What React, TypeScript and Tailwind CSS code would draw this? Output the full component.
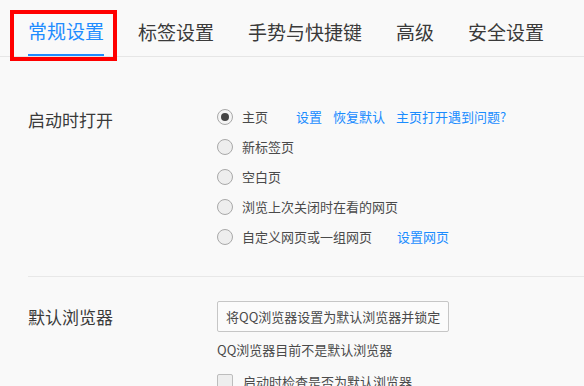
import React from "react";

const tabs = ["常规设置", "标签设置", "手势与快捷键", "高级", "安全设置"];

const startOptions = [
  { label: "主页", checked: true },
  { label: "新标签页" },
  { label: "空白页" },
  { label: "浏览上次关闭时在看的网页" },
  { label: "自定义网页或一组网页" },
];

const Radio: React.FC<{ checked?: boolean }> = ({ checked }) => (
  <span
    className={`w-[16px] h-[16px] rounded-full border border-[#a9a9a9] flex items-center justify-center shrink-0 ${
      checked ? "bg-[#f4f4f4]" : "bg-[#eeeeee]"
    }`}
  >
    {checked && <span className="w-[8px] h-[8px] rounded-full bg-[#444]" />}
  </span>
);

export default function App() {
  return (
    <div
      className="relative w-[584px] h-[386px] overflow-hidden bg-[#f9f9f9] text-[#3a3a3a]"
      style={{ fontFamily: '"Noto Sans CJK SC", "Noto Sans", sans-serif' }}
    >
      {/* Tabs */}
      <div className="flex h-[57px] pl-[28px] gap-[34px] border-b border-[#e6e6e6]">
        {tabs.map((t, i) => (
          <div
            key={t}
            className={`h-[56px] flex items-center pt-[8px] text-[19px] leading-[24px] ${
              i === 0 ? "text-[#1e8cff] border-b-2 border-[#1e8cff]" : "text-[#3a3a3a]"
            }`}
          >
            {t}
          </div>
        ))}
      </div>

      {/* red highlight round the active tab */}
      <div className="absolute left-[10px] top-[10px] w-[107px] h-[51px] border-4 border-[#ff0000]" />

      {/* Startup */}
      <div className="flex pl-[28px] pt-[45px]">
        <div className="w-[189px] pt-[6px] text-[17px] leading-[24px]">启动时打开</div>
        <div className="flex flex-col text-[13px] text-[#4a4a4a]">
          {startOptions.map((o, i) => (
            <div key={o.label} className="h-[30px] flex items-center">
              <Radio checked={o.checked} />
              <span className="ml-[9px]">{o.label}</span>
              {i === 0 && (
                <div className="flex gap-[11px] ml-[28px] text-[#1a8cff]">
                  <span>设置</span>
                  <span>恢复默认</span>
                  <span>主页打开遇到问题?</span>
                </div>
              )}
              {i === 4 && <span className="ml-[25px] text-[#1a8cff]">设置网页</span>}
            </div>
          ))}
        </div>
      </div>

      <div className="ml-[28px] mt-[24px] h-px bg-[#e8e8e8]" />

      {/* Default browser */}
      <div className="flex pl-[28px] pt-[24px]">
        <div className="w-[189px] mt-[4px] text-[17px] leading-[24px]">默认浏览器</div>
        <div className="flex flex-col items-start text-[13px] text-[#4a4a4a]">
          <button className="h-[31px] px-[8px] border border-[#c6c6c6] rounded-[2px] bg-[#fbfbfb] text-[13px] text-[#4a4a4a] leading-[20px]">
            将QQ浏览器设置为默认浏览器并锁定
          </button>
          <div className="mt-[8px] leading-[20px]">QQ浏览器目前不是默认浏览器</div>
          <div className="mt-[12px] h-[20px] flex items-center">
            <span className="w-[16px] h-[16px] rounded-[2px] border border-[#bdbdbd] bg-[#eeeeee]" />
            <span className="ml-[10px]">启动时检查是否为默认浏览器</span>
          </div>
        </div>
      </div>
    </div>
  );
}
